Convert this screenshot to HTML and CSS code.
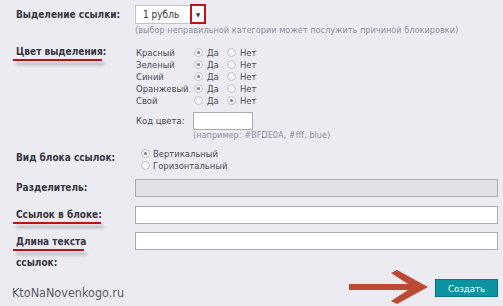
FILE: index.html
```html
<!DOCTYPE html>
<html lang="ru">
<head>
<meta charset="utf-8">
<link rel="stylesheet" href="styles.css">
</head>
<body>
<div class="form">
  <div class="row row-select">
    <div class="label"><span class="label-text">Выделение ссылки:</span></div>
    <div class="field">
      <div class="select">
        <span class="select-val">1 рубль</span>
        <span class="select-arrow">▼</span>
      </div>
      <div class="hint">(выбор неправильной категории может послужить причиной блокировки)</div>
    </div>
  </div>

  <div class="row row-colors">
    <div class="label">
      <span class="label-text">Цвет выделения:</span>
      <span class="underline ul-colors"></span>
    </div>
    <div class="field colors">
      <span class="cname">Красный</span><span class="opt"><span class="radio checked"></span>Да</span><span class="opt"><span class="radio"></span>Нет</span>
      <span class="cname">Зеленый</span><span class="opt"><span class="radio checked"></span>Да</span><span class="opt"><span class="radio"></span>Нет</span>
      <span class="cname">Синий</span><span class="opt"><span class="radio checked"></span>Да</span><span class="opt"><span class="radio"></span>Нет</span>
      <span class="cname">Оранжевый</span><span class="opt"><span class="radio checked"></span>Да</span><span class="opt"><span class="radio"></span>Нет</span>
      <span class="cname">Свой</span><span class="opt"><span class="radio"></span>Да</span><span class="opt"><span class="radio checked"></span>Нет</span>
      <span class="cname code-label">Код цвета:</span><span class="input code-input"></span>
      <span class="hint code-hint">(например: #BFDE0A, #fff, blue)</span>
    </div>
  </div>

  <div class="row row-view">
    <div class="label"><span class="label-text">Вид блока ссылок:</span></div>
    <div class="field view-opts">
      <span class="vopt"><span class="radio checked"></span>Вертикальный</span>
      <span class="vopt"><span class="radio"></span>Горизонтальный</span>
    </div>
  </div>

  <div class="row row-sep">
    <div class="label"><span class="label-text">Разделитель:</span></div>
    <div class="field"><span class="input wide disabled"></span></div>
  </div>

  <div class="row row-count">
    <div class="label">
      <span class="label-text">Ссылок в блоке:</span>
      <span class="underline ul-count"></span>
    </div>
    <div class="field"><span class="input wide"></span></div>
  </div>

  <div class="row row-len">
    <div class="label">
      <span class="label-text">Длина текста</span>
      <span class="underline ul-len"></span>
      <span class="label-text second">ссылок:</span>
    </div>
    <div class="field"><span class="input wide"></span></div>
  </div>

  <div class="bottom">
    <span class="watermark">KtoNaNovenkogo.ru</span>
    <div class="submit">
      <svg class="arrow" width="80" height="36" viewBox="0 0 80 36">
        <path d="M0 14 L59 14 L42 3 L48 0 L79 17 L48 34 L42 31 L59 20 L0 20 Z" fill="#bc4a33"/>
      </svg>
      <span class="button">Создать</span>
    </div>
  </div>
</div>
</body>
</html>
```

FILE: styles.css
```css
* { box-sizing: border-box; }
html, body {
  margin: 0;
  padding: 0;
  background: #ecebf1;
}
body {
  width: 503px;
  height: 306px;
  overflow: hidden;
  font-family: "DejaVu Sans Condensed", "DejaVu Sans", sans-serif;
  font-size: 9.4px;
  color: #4a4a58;
  text-align: left;
}
.form {
  display: flex;
  flex-direction: column;
  padding-right: 5px;
}
.row {
  display: flex;
  align-items: flex-start;
}
.label {
  width: 135px;
  flex: none;
  padding-left: 16px;
  display: flex;
  flex-direction: column;
  align-items: flex-start;
}
.label-text {
  font-weight: bold;
  color: #363644;
  line-height: 12px;
  font-size: 10px;
  white-space: nowrap;
}
.field {
  flex: 1;
  min-width: 0;
}

/* row 1 */
.row-select { padding-top: 5px; }
.row-select .label { padding-top: 4px; }
.select {
  position: relative;
  width: 71px;
  height: 19px;
  background: #fff;
  border: 1px solid #c4c4cc;
  display: flex;
  align-items: center;
  padding-left: 7px;
  color: #333;
  font-size: 10px;
}
.select-arrow {
  position: absolute;
  right: -1px;
  top: -2px;
  width: 16px;
  height: 20px;
  border: 2px solid #c0141c;
  display: flex;
  align-items: center;
  justify-content: center;
  font-size: 6px;
  color: #333;
  background: #fff;
}
.hint {
  display: block;
  color: #8f8fa6;
  line-height: 11px;
  margin-top: 1px;
  font-size: 9.1px;
  white-space: nowrap;
}

/* colors */
.row-colors { margin-top: 10px; }
.underline {
  display: block;
  height: 2px;
  background: #c20e16;
  margin-left: -3px;
  margin-top: 1px;
  box-shadow: 3px 4px 3px rgba(60, 60, 70, 0.35);
}
.ul-colors { width: 89px; }
.colors {
  display: grid;
  grid-template-columns: 58px 33px auto;
  grid-template-rows: repeat(5, 12px) 24px 10px;
  align-items: center;
  justify-items: start;
  padding-left: 1px;
}
.cname { white-space: nowrap; }
.opt {
  display: flex;
  align-items: center;
  white-space: nowrap;
}
.radio {
  display: inline-block;
  width: 9px;
  height: 9px;
  border-radius: 50%;
  border: 1px solid #c2c2c8;
  background: #f6f6f8;
  margin-right: 4px;
  position: relative;
  flex: none;
}
.radio.checked::after {
  content: "";
  position: absolute;
  left: 2px;
  top: 2px;
  width: 3px;
  height: 3px;
  border-radius: 50%;
  background: #7a7a80;
}
.code-label {
  grid-column: 1;
  grid-row: 6;
  align-self: end;
  line-height: 18px;
}
.input {
  display: block;
  height: 18px;
  background: #fff;
  border: 1px solid #acacb0;
}
.code-input {
  grid-column: 2 / 4;
  grid-row: 6;
  align-self: end;
  width: 60px;
  margin-left: -1px;
}
.code-hint {
  grid-column: 2 / 4;
  grid-row: 7;
  margin-top: 0;
  margin-left: -1px;
  line-height: 10px;
}

/* view */
.row-view { margin-top: 7px; }
.row-view .label { padding-top: 5px; }
.view-opts { display: flex; flex-direction: column; padding-left: 6px; }
.vopt { display: flex; align-items: center; height: 12px; white-space: nowrap; }
.vopt .radio { margin-right: 3px; }

/* inputs */
.wide { width: 363px; }
.disabled { background: #e1e0e6; }
.row-sep { margin-top: 8px; align-items: center; }
.row-count { margin-top: 9px; }
.row-count .label { padding-top: 3px; }
.ul-count { width: 88px; }
.row-len { margin-top: 8px; }
.row-len .label { padding-top: 4px; }
.ul-len { width: 71px; }
.label-text.second { margin-top: 6px; }

/* bottom */
.bottom {
  display: flex;
  justify-content: space-between;
  align-items: flex-end;
  margin-top: 1px;
  padding-left: 12px;
}
.watermark {
  font-size: 12.5px;
  color: #5c5c64;
  line-height: 16px;
  margin-bottom: 5px;
}
.submit {
  display: flex;
  align-items: center;
}
.arrow { display: block; margin-right: 6px; }
.button {
  display: flex;
  align-items: center;
  justify-content: center;
  width: 63px;
  height: 18px;
  background: #0b93a1;
  border: 1px solid #087382;
  color: #fff;
  font-size: 9.5px;
}
```
